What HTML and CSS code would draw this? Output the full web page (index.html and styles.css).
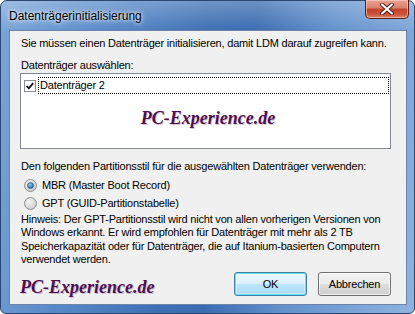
FILE: index.html
```html
<!DOCTYPE html>
<html lang="de">
  <head>
    <meta charset="UTF-8" />
    <title>Datenträgerinitialisierung</title>
    <link rel="stylesheet" href="styles.css">
  </head>
  <body>
    <div class="window">
      <div class="titlebar">
        <span class="title">Datenträgerinitialisierung</span>
        <div class="close">
          <svg width="16" height="12" viewBox="0 0 16 12">
            <path d="M3 1.5 L13 10.5 M13 1.5 L3 10.5" stroke="#4a1a14" stroke-width="4" stroke-linecap="round" />
            <path d="M3 1.5 L13 10.5 M13 1.5 L3 10.5" stroke="#ffffff" stroke-width="2.2" stroke-linecap="round" />
          </svg>
        </div>
      </div>
      <div class="client">
        <p class="line intro">Sie müssen einen Datenträger initialisieren, damit LDM darauf zugreifen kann.</p>
        <p class="line label">Datenträger auswählen:</p>
        <div class="listbox">
          <div class="item">
            <svg class="check" width="12" height="12" viewBox="0 0 12 12">
              <rect x="0.5" y="0.5" width="11" height="11" fill="#fff" stroke="#8e8f8f" />
              <path d="M2.6 6 L4.8 8.4 L9.2 3.2" fill="none" stroke="#111" stroke-width="1.8" />
            </svg>
            <span class="item-text">Datenträger 2</span>
          </div>
          <div class="watermark mid">PC-Experience.de</div>
        </div>
        <p class="line style">Den folgenden Partitionsstil für die ausgewählten Datenträger verwenden:</p>
        <div class="radio">
          <svg width="13" height="13" viewBox="0 0 13 13">
            <defs>
              <radialGradient id="rb" cx="0.4" cy="0.35" r="0.7">
                <stop offset="0" stop-color="#f6f6f6" />
                <stop offset="1" stop-color="#c9c9c9" />
              </radialGradient>
              <radialGradient id="dot" cx="0.4" cy="0.35" r="0.7">
                <stop offset="0" stop-color="#8fd0f4" />
                <stop offset="1" stop-color="#1c5f9a" />
              </radialGradient>
            </defs>
            <circle cx="6.5" cy="6.5" r="6" fill="url(#rb)" stroke="#8e8f8f" />
            <circle cx="6.5" cy="6.5" r="3" fill="url(#dot)" stroke="#1f4f7a" stroke-width="0.6" />
          </svg>
          <span>MBR (Master Boot Record)</span>
        </div>
        <div class="radio">
          <svg width="13" height="13" viewBox="0 0 13 13">
            <circle cx="6.5" cy="6.5" r="6" fill="url(#rb)" stroke="#8e8f8f" />
          </svg>
          <span>GPT (GUID-Partitionstabelle)</span>
        </div>
        <p class="note">Hinweis: Der GPT-Partitionsstil wird nicht von allen vorherigen Versionen von<br>Windows erkannt. Er wird empfohlen für Datenträger mit mehr als 2 TB<br>Speicherkapazität oder für Datenträger, die auf Itanium-basierten Computern<br>verwendet werden.</p>
        <div class="footer">
          <span class="watermark">PC-Experience.de</span>
          <div class="buttons">
            <button class="btn default">OK</button>
            <button class="btn">Abbrechen</button>
          </div>
        </div>
      </div>
    </div>
  </body>
</html>
```

FILE: styles.css
```css
* {
  box-sizing: border-box;
  padding: 0;
  margin: 0;
}
body {
  width: 415px;
  height: 314px;
  overflow: hidden;
  background: #ffffff;
  font-family: "Liberation Sans", Arial, sans-serif;
  font-size: 11px;
  letter-spacing: -0.2px;
  color: #000;
}
.window {
  width: 415px;
  height: 314px;
  display: flex;
  flex-direction: column;
  padding: 0 7px 8px 8px;
  border: 1px solid #2b4670;
  border-radius: 7px 7px 6px 6px;
  background:
    linear-gradient(180deg, rgba(255, 255, 255, 0.25) 0, rgba(255, 255, 255, 0) 30px),
    linear-gradient(100deg, #7ca6d8 0%, #5a8bc9 22%, #3f70b4 45%, #3b6cb1 55%, #6492cd 72%, #8fb3df 100%);
}
.titlebar {
  flex: none;
  height: 29px;
  display: flex;
  align-items: flex-start;
  justify-content: space-between;
}
.title {
  font-size: 12px;
  letter-spacing: 0;
  line-height: 14px;
  padding-top: 8px;
  color: #000;
  text-shadow: 0 0 6px rgba(255, 255, 255, 0.9), 0 0 3px rgba(255, 255, 255, 0.9);
}
.close {
  width: 44px;
  height: 19px;
  margin-top: -1px;
  margin-right: -2px;
  display: flex;
  align-items: center;
  justify-content: center;
  border: 1px solid #5a1f1a;
  border-top: none;
  border-radius: 0 0 5px 5px;
  background: linear-gradient(180deg, #e8a492 0%, #d8806c 45%, #c4412a 50%, #c9553c 80%, #df8a6a 100%);
  box-shadow: inset 0 0 0 1px rgba(255, 220, 210, 0.5);
}
.client {
  flex: 1;
  min-height: 0;
  display: flex;
  flex-direction: column;
  padding: 6px 15px 0 10px;
  border: 1px solid #6c84a8;
  background: #f0f0f0;
  white-space: nowrap;
}
.line {
  line-height: 13px;
  padding-left: 1px;
}
.label {
  margin-top: 9px;
}
.listbox {
  flex: none;
  margin-top: 1px;
  height: 76px;
  border: 1px solid #828790;
  background: #fff;
  padding: 3px 1px 0 2px;
}
.item {
  height: 17px;
  display: flex;
  align-items: center;
  gap: 2px;
}
.check {
  flex: none;
  margin-left: 1px;
}
.item-text {
  flex: 1;
  height: 17px;
  line-height: 15px;
  padding-left: 1px;
  border: 1px dotted #000;
}
.watermark {
  font-family: "Liberation Serif", "DejaVu Serif", serif;
  font-style: italic;
  font-weight: bold;
  font-size: 18px;
  letter-spacing: 0;
  color: #4d0f4d;
  text-shadow: 1px 1px 0 rgba(120, 60, 120, 0.3);
}
.watermark.mid {
  text-align: center;
  margin-top: 14px;
  margin-left: 4px;
}
.style {
  margin-top: 11px;
}
.radio {
  flex: none;
  height: 18px;
  display: flex;
  align-items: center;
  gap: 5px;
  padding-left: 4px;
  margin-top: 3px;
}
.radio + .radio {
  margin-top: 0;
}
.note {
  margin-top: 1px;
  line-height: 13.4px;
  padding-left: 1px;
}
.footer {
  display: flex;
  justify-content: space-between;
  align-items: flex-start;
  margin-top: 5px;
}
.footer .watermark {
  margin-top: 5px;
}
.buttons {
  display: flex;
  gap: 11px;
}
.btn {
  width: 73px;
  height: 24px;
  font-family: "Liberation Sans", Arial, sans-serif;
  font-size: 11px;
  letter-spacing: -0.2px;
  color: #000;
  border: 1px solid #707070;
  border-radius: 3px;
  background: linear-gradient(180deg, #f2f2f2 0%, #ebebeb 50%, #dddddd 50%, #cfcfcf 100%);
  box-shadow: inset 0 0 0 1px rgba(255, 255, 255, 0.7);
}
.btn.default {
  border-color: #3c7fb1;
  background: linear-gradient(180deg, #eaf6fd 0%, #d9f0fc 50%, #bee6fd 50%, #a7d9f5 100%);
  box-shadow: inset 0 0 0 1px #5ee0ff, inset 0 0 0 2px rgba(255, 255, 255, 0.4);
}
```
